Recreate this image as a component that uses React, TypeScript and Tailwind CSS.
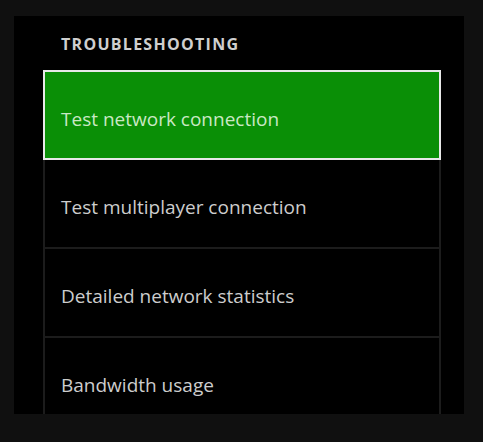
export default function App() {
  const items = [
    "Test network connection",
    "Test multiplayer connection",
    "Detailed network statistics",
    "Bandwidth usage",
  ]
  return (
    <div className="w-[483px] h-[442px] bg-[#101010] pt-4 pl-[14px] overflow-hidden" style={{ fontFamily: '"Open Sans", "Noto Sans", sans-serif' }}>
      <div className="bg-black w-[450px] h-[398px] overflow-hidden pl-[29px]">
        <div className="h-[54px] pt-[20px] pl-[18px] text-[16px] font-bold tracking-[0.08em] text-[#cfcfcf] leading-none">
          TROUBLESHOOTING
        </div>
        <div className="flex flex-col w-[398px]">
          {items.map((item, index) => {
            return index === 0 ? (
              <div key={item} className="h-[90px] bg-[#0a8f06] border-2 border-[#e8e8e8] pt-[35px] pl-4 text-[19px] leading-6 text-[#c9e8c4]">
                {item}
              </div>
            ) : (
              <div key={item} className="h-[89px] border-x-2 border-b-2 border-[#1c1c1c] pt-[35px] pl-[16px] text-[19px] leading-6 text-[#cdcdcd]">
                {item}
              </div>
            )
          })}
        </div>
      </div>
    </div>
  )
}
